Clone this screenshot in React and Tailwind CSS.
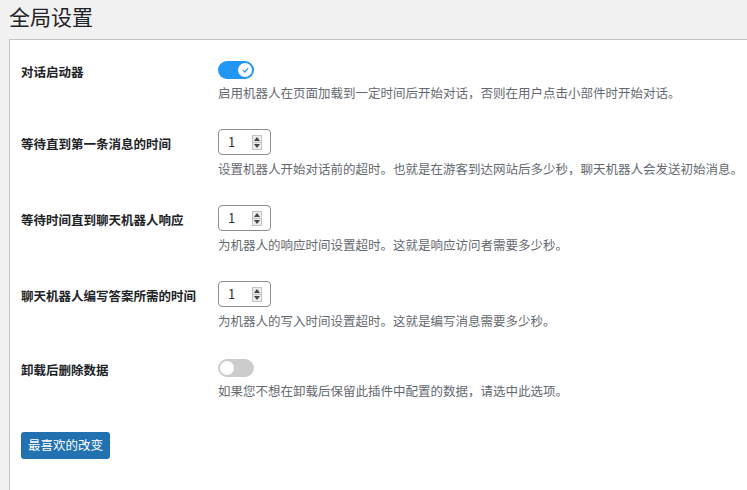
import React from 'react'

const FONT = { fontFamily: '"Microsoft YaHei", "Noto Sans CJK SC", "Noto Sans", sans-serif' }

const ROWS = [
  {
    label: '对话启动器',
    type: 'toggle',
    on: true,
    desc: '启用机器人在页面加载到一定时间后开始对话，否则在用户点击小部件时开始对话。',
  },
  {
    label: '等待直到第一条消息的时间',
    type: 'number',
    desc: '设置机器人开始对话前的超时。也就是在游客到达网站后多少秒，聊天机器人会发送初始消息。',
  },
  {
    label: '等待时间直到聊天机器人响应',
    type: 'number',
    desc: '为机器人的响应时间设置超时。这就是响应访问者需要多少秒。',
  },
  {
    label: '聊天机器人编写答案所需的时间',
    type: 'number',
    desc: '为机器人的写入时间设置超时。这就是编写消息需要多少秒。',
  },
  {
    label: '卸载后删除数据',
    type: 'toggle',
    on: false,
    desc: '如果您不想在卸载后保留此插件中配置的数据，请选中此选项。',
  },
]

function Toggle({ on }) {
  return (
    <div
      className={`flex h-[18px] w-[36px] items-center rounded-full px-[2px] ${
        on ? 'justify-end bg-[#2196f3]' : 'justify-start bg-[#cccccc]'
      }`}
    >
      <div className="flex h-[14px] w-[14px] items-center justify-center rounded-full bg-white">
        {on && (
          <svg width="7" height="7" viewBox="0 0 8 8">
            <path d="M1.5 4.2 L3.2 5.8 L6.5 1.8" fill="none" stroke="#2196f3" strokeWidth="1.4" strokeLinecap="round" strokeLinejoin="round" />
          </svg>
        )}
      </div>
    </div>
  )
}

function NumberBox() {
  return (
    <div className="flex h-[26px] w-[53px] items-center rounded-[4px] border border-[#8c8f94] bg-white pl-[9px] pr-[8px]">
      <span className="flex-1 text-[13px] text-[#2c3338]">1</span>
      <div className="flex h-[15px] w-[10px] flex-col border border-[#c4c4c4] bg-[#ececec]">
        <div className="flex flex-1 items-center justify-center border-b border-[#c4c4c4]">
          <svg width="6" height="4" viewBox="0 0 6 4"><path d="M0 4 L3 0 L6 4 Z" fill="#444" /></svg>
        </div>
        <div className="flex flex-1 items-center justify-center">
          <svg width="6" height="4" viewBox="0 0 6 4"><path d="M0 0 L6 0 L3 4 Z" fill="#444" /></svg>
        </div>
      </div>
    </div>
  )
}

export default function App() {
  return (
    <div className="min-h-[490px] bg-[#f1f1f1] pl-[9px]" style={FONT}>
      <h1 className="pt-[2px] text-[21px] leading-[28px] font-normal text-[#1d2327]">全局设置</h1>
      <div className="mt-[9px] min-h-[460px] border-t border-l border-[#c3c4c7] bg-white pt-[21px] pl-[11px]">
        <div className="flex flex-col gap-[27px]">
          {ROWS.map((row, i) => (
            <div key={row.label} className={`flex ${i === ROWS.length - 1 ? 'mt-[2px]' : ''}`}>
              <div
                className={`flex w-[197px] shrink-0 items-center pt-[2px] text-[12.5px] font-bold text-[#1d2327] ${
                  row.type === 'toggle' ? 'h-[20px]' : 'h-[28px]'
                }`}
              >
                {row.label}
              </div>
              <div className="flex flex-col">
                {row.type === 'toggle' ? <Toggle on={row.on} /> : <NumberBox />}
                <p className="mt-[5px] whitespace-nowrap text-[12.5px] leading-[18px] text-[#646970]">{row.desc}</p>
              </div>
            </div>
          ))}
        </div>
        <button
          type="button"
          className="mt-[32px] h-[27px] rounded-[3px] bg-[#2271b1] px-[7px] text-[12.5px] text-white"
        >
          最喜欢的改变
        </button>
      </div>
    </div>
  )
}
